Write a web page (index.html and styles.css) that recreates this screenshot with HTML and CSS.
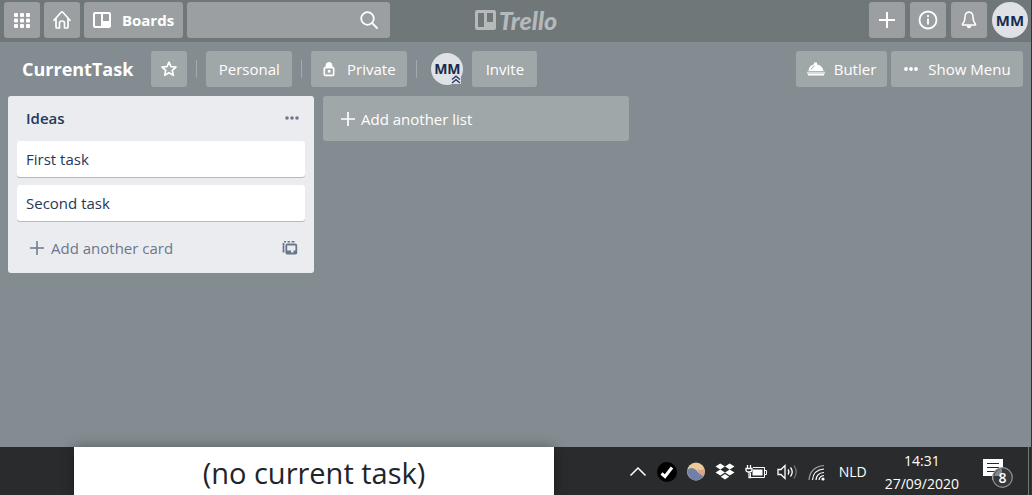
FILE: index.html
```html
<!DOCTYPE html>
<html lang="en">
<head>
<meta charset="utf-8">
<title>CurrentTask | Trello</title>
<link rel="stylesheet" href="styles.css">
</head>
<body>
<div class="screen">
  <header class="topbar">
    <div class="topbar-side">
      <button class="btn btn-top btn-square" aria-label="Apps">
        <svg width="16" height="16" viewBox="0 0 16 16" fill="currentColor"><rect x="0" y="1" width="4" height="4" rx="1"/><rect x="6" y="1" width="4" height="4" rx="1"/><rect x="12" y="1" width="4" height="4" rx="1"/><rect x="0" y="6.500" width="4" height="4" rx="1"/><rect x="6" y="6.500" width="4" height="4" rx="1"/><rect x="12" y="6.500" width="4" height="4" rx="1"/><rect x="0" y="12" width="4" height="4" rx="1"/><rect x="6" y="12" width="4" height="4" rx="1"/><rect x="12" y="12" width="4" height="4" rx="1"/></svg>
      </button>
      <button class="btn btn-top btn-square" aria-label="Home">
        <svg width="20" height="20" viewBox="0 0 20 20" fill="none" stroke="currentColor" stroke-width="1.700" stroke-linejoin="round" stroke-linecap="round"><path d="M2 10.300 9.200 2.300Q10 1.500 10.800 2.300L18 10.300M4 8.300V17.200Q4 18 4.800 18H7.500V13Q7.500 11 10 11Q12.500 11 12.500 13V18H15.200Q16 18 16 17.200V8.300"/></svg>
      </button>
      <button class="btn btn-top btn-boards">
        <svg width="18" height="18" viewBox="0 0 18 18"><path fill="currentColor" fill-rule="evenodd" d="M2 1H16Q18 1 18 3V15Q18 17 16 17H2Q0 17 0 15V3Q0 1 2 1ZM2 3V15H8V3ZM10 3V10H16V3Z"/></svg>
        <span>Boards</span>
      </button>
      <div class="search">
        <input class="search-input" type="text" aria-label="Search">
        <svg class="search-icon" width="18" height="18" viewBox="0 0 18 18" fill="none" stroke="currentColor" stroke-width="1.800" stroke-linecap="round"><circle cx="7.500" cy="7.500" r="6.300"/><path d="M12.200 12.200 17 17"/></svg>
      </div>
    </div>
    <a class="logo" href="#">
      <svg width="22" height="22" viewBox="0 0 22 22"><path fill="currentColor" fill-rule="evenodd" d="M2 1H19Q21 1 21 3V19Q21 21 19 21H2Q0 21 0 19V3Q0 1 2 1ZM3 4V18H9V4ZM12 4V13H18V4Z"/></svg>
      <span class="wordmark">Trello</span>
    </a>
    <div class="topbar-side topbar-end">
      <button class="btn btn-top btn-square" aria-label="Create">
        <svg width="18" height="18" viewBox="0 0 18 18" stroke="currentColor" stroke-width="2"><path d="M1 9H17M9 1V17"/></svg>
      </button>
      <button class="btn btn-top btn-square" aria-label="Information">
        <svg width="20" height="20" viewBox="0 0 20 20" fill="none" stroke="currentColor"><circle cx="10" cy="10" r="8.500" stroke-width="1.800"/><path d="M10 8.500V14.500M10 5V7" stroke-width="1.800"/></svg>
      </button>
      <button class="btn btn-top btn-square" aria-label="Notifications">
        <svg width="18" height="20" viewBox="0 0 18 20" fill="none" stroke="currentColor" stroke-width="1.500" stroke-linejoin="round"><path d="M9 2Q5 2.500 5 7Q5 11.500 2.500 14V15H15.500V14Q13 11.500 13 7Q13 2.500 9 2Z"/><path d="M7.500 15.500Q7.500 17.500 9 17.500Q10.500 17.500 10.500 15.500" fill="currentColor"/></svg>
      </button>
      <button class="avatar avatar-large" aria-label="Account MM">MM</button>
    </div>
  </header>

  <main class="board">
    <div class="boardbar">
      <h1 class="board-title">CurrentTask</h1>
      <button class="btn btn-board btn-square" aria-label="Star board">
        <svg width="16" height="16" viewBox="0 0 16 16" fill="none" stroke="currentColor" stroke-width="1.700" stroke-linejoin="round"><path d="M8 1.200 10 5.600 15 6 11.300 9.300 12.300 14.300 8 11.700 3.700 14.300 4.700 9.300 1 6 6 5.600Z"/></svg>
      </button>
      <span class="divider"></span>
      <button class="btn btn-board btn-text">Personal</button>
      <span class="divider"></span>
      <button class="btn btn-board btn-private">
        <svg width="12" height="16" viewBox="0 0 12 16" fill="none" stroke="currentColor"><path d="M3 6.500V4.500Q3 1.500 6 1.500Q9 1.500 9 4.500V6.500Z" fill="currentColor"/><rect x="1.300" y="6.700" width="9.400" height="7.600" rx="1" stroke-width="1.700"/><rect x="4.800" y="9" width="2.600" height="2.600" fill="currentColor" stroke="none"/></svg>
        <span>Private</span>
      </button>
      <span class="divider"></span>
      <span class="member">
        <button class="avatar avatar-small" aria-label="Member MM">MM</button>
        <svg class="member-badge" width="10" height="9" viewBox="0 0 10 9"><path d="M0 0H10V9H0Z" fill="#dfe1e6"/><path d="M1 4.500 5 1.200 9 4.500M1 8 5 4.700 9 8" fill="none" stroke="#2b3d68" stroke-width="1.400"/></svg>
      </span>
      <button class="btn btn-board btn-invite">Invite</button>
      <div class="boardbar-end">
        <button class="btn btn-board btn-butler">
          <svg width="18" height="16" viewBox="0 0 18 16" fill="currentColor"><path d="M1.500 10Q2 4.500 7 3.200V1.500H10V3.200Q15.500 4.500 16.500 10Z"/><path d="M0 10.700H18V13H0Z" opacity=".6"/><path d="M1 13H17V14.500H1Z"/><path d="M4 8.500Q5 6 7.500 5" stroke="#a0a7a9" fill="none"/></svg>
          <span>Butler</span>
        </button>
        <button class="btn btn-board btn-menu">
          <svg width="16" height="16" viewBox="0 0 16 16" fill="currentColor"><circle cx="3" cy="8" r="1.900"/><circle cx="8" cy="8" r="1.900"/><circle cx="13" cy="8" r="1.900"/></svg>
          <span>Show Menu</span>
        </button>
      </div>
    </div>

    <div class="lists">
      <section class="list">
        <div class="list-header">
          <h2 class="list-title">Ideas</h2>
          <button class="icon-btn" aria-label="List actions">
            <svg width="16" height="16" viewBox="0 0 16 16" fill="currentColor"><circle cx="3" cy="8" r="1.800"/><circle cx="8" cy="8" r="1.800"/><circle cx="13" cy="8" r="1.800"/></svg>
          </button>
        </div>
        <a class="card" href="#">First task</a>
        <a class="card" href="#">Second task</a>
        <div class="list-footer">
          <button class="add-card">
            <svg width="14" height="14" viewBox="0 0 14 14" stroke="currentColor" stroke-width="1.500"><path d="M0 7H14M7 0V14"/></svg>
            <span>Add another card</span>
          </button>
          <button class="icon-btn" aria-label="Create from template">
            <svg width="16" height="16" viewBox="0 0 16 16" fill="none" stroke="currentColor"><path d="M1.500 12V3.500M2 1.800H4M5.500 1.800H8M9.500 1.800H12.500" stroke-width="1.500"/><path d="M1.500 3V5M1.500 6.500V8.500M1.500 10V12.500" stroke-width="1.500"/><rect x="4.300" y="4.500" width="10" height="9" rx="1" stroke-width="1.800"/><path d="M4 10.500H9V14H4ZM11.500 10.500H15V14H11.500Z" fill="currentColor" stroke="none"/></svg>
          </button>
        </div>
      </section>
      <button class="add-list">
        <svg width="14" height="14" viewBox="0 0 14 14" stroke="currentColor" stroke-width="1.700"><path d="M0 7H14M7 0V14"/></svg>
        <span>Add another list</span>
      </button>
    </div>
  </main>

  <footer class="taskbar">
    <div class="current-task">(no current task)</div>
    <div class="tray">
      <svg width="18" height="20" viewBox="0 0 18 20" fill="none" stroke="#fff" stroke-width="1.500"><path d="M1.500 13.500 9 6 16.500 13.500"/></svg>
      <svg width="20" height="20" viewBox="0 0 20 20"><circle cx="10" cy="10" r="10" fill="#000"/><path d="M4.500 11.500 8 14.500 15 5.500" fill="none" stroke="#fff" stroke-width="3"/></svg>
      <svg width="18" height="20" viewBox="0 0 18 20"><circle cx="9" cy="9.500" r="9" fill="#edc998"/><path d="M10 7Q13 9 17.500 7Q18.500 13 14.500 16Z" fill="#d9a58c"/><path d="M0 8Q5 4 9 8Q12 12 16 14Q13 18.500 9 18.500Q1 18 0 8Z" fill="#7180aa"/></svg>
      <svg width="20" height="20" viewBox="0 0 20 20" fill="#fff"><path d="M5.300 1.500 10 4.500 5.300 7.500.5 4.500ZM14.700 1.500 19.500 4.500 14.700 7.500 10 4.500ZM5.300 7.500 10 10.500 5.300 13.500.5 10.500ZM14.700 7.500 19.500 10.500 14.700 13.500 10 10.500ZM10 12 14.200 14.700 10 17.500 5.800 14.700Z"/></svg>
      <svg width="22" height="20" viewBox="0 0 22 20"><path d="M8 5.500H19.500V15.500H5.500V11" fill="none" stroke="#fff"/><path d="M8 7.500H17.500V13.500H7.500V10Z" fill="#fff"/><path d="M20 8.500H21.500V12.500H20" fill="none" stroke="#fff"/><path d="M2.500 3V6M5.500 3V6M1 6.500H7V8Q7 10 4 10Q1 10 1 8ZM4 10V15.500H6" fill="none" stroke="#fff" stroke-width="1.300"/></svg>
      <svg width="21" height="20" viewBox="0 0 21 20" fill="none" stroke="#fff" stroke-width="1.300"><path d="M1 7.500H4L8 3.500V16.500L4 12.500H1Z"/><path d="M11 7.500Q12.800 10 11 12.500M13.500 5.500Q17 10 13.500 14.500"/><path d="M17 3.500Q21.500 10 17 16.500" stroke="#75757f"/></svg>
      <svg width="18" height="20" viewBox="0 0 18 20" fill="none" stroke="#fff" stroke-width="1.200"><path d="M1 18Q2 5 16 3.500" stroke="#a1a1a5"/><path d="M4.500 18Q5 8 16 7M8 18Q8.500 11 16 10.500M11 18Q11.500 14 16 13.500"/><circle cx="15" cy="17" r="1.600" fill="#fff" stroke="none"/></svg>
      <span class="language">NLD</span>
      <div class="clock"><time>14:31</time><time>27/09/2020</time></div>
      <svg class="action-center" width="32" height="32" viewBox="0 0 32 32"><path d="M1 3H21V20H14L10 24V20H1Z" fill="#fff"/><path d="M5 7.500H17M5 11.500H17M5 15.500H13" stroke="#26282a" stroke-width="1.200"/><circle cx="20.500" cy="21.500" r="9.800" fill="#36393b" stroke="#929595" stroke-width="1.200"/><path d="M12 20Q13.500 14 20 12.500V20Z" fill="#858889"/><text class="badge-count" x="20.500" y="26.500" text-anchor="middle">8</text></svg>
    </div>
    <span class="show-desktop"></span>
  </footer>
</div>
</body>
</html>
```
FILE: styles.css
```css
* { box-sizing: border-box; }

body {
  margin: 0;
  font-family: "Open Sans", "Noto Sans", sans-serif;
  font-size: 15px;
  line-height: 20px;
  color: #253858;
}

button, input { font: inherit; color: inherit; margin: 0; border: 0; padding: 0; }
button { display: flex; align-items: center; justify-content: center; white-space: nowrap; cursor: pointer; }
a { color: inherit; text-decoration: none; }
h1, h2 { margin: 0; }
svg { display: block; flex: none; }

.screen {
  display: flex;
  flex-direction: column;
  min-height: 100vh;
  background: #838c91;
  border-right: 1px solid #303436;
}

.topbar {
  display: grid;
  grid-template-columns: 1fr auto 1fr;
  align-items: start;
  height: 42px;
  padding: 2px 3px 4px 4px;
  background: #6f7779;
  color: #fff;
}
.topbar-side { display: flex; gap: 4px; }
.topbar-end { gap: 5px; justify-content: flex-end; }

.btn { height: 36px; border-radius: 3px; color: #fff; }
.btn-top { background: #9b9fa1; }
.btn-board { background: #a0a7a9; }
.btn-square { width: 36px; }
.btn-boards { width: 99px; gap: 11px; font-weight: 700; }

.search {
  display: flex;
  align-items: center;
  width: 203px;
  height: 36px;
  padding-right: 12px;
  border-radius: 3px;
  background: #9b9fa1;
}
.search-input { flex: 1; min-width: 0; height: 36px; padding-left: 10px; background: transparent; outline: 0; }

.logo { display: flex; align-items: center; gap: 2px; height: 36px; color: #b5b9ba; }
.wordmark { font-family: Lato, sans-serif; font-size: 25px; font-weight: 900; font-style: italic; line-height: 32px; }

.avatar { border-radius: 50%; background: #dfe1e6; color: #172b4d; font-weight: 700; }
.avatar-large { width: 36px; height: 36px; font-size: 15px; }
.avatar-small { width: 32px; height: 32px; font-size: 14px; }
.member { position: relative; margin-right: 9px; margin-left: 5px; }
.member-badge { position: absolute; right: 2px; bottom: 1px; }

.board { display: flex; flex: 1; flex-direction: column; }
.boardbar { display: flex; align-items: center; padding: 9px 8px 9px 22px; }
.board-title { margin-right: 18px; font-size: 18px; line-height: 28px; font-weight: 700; color: #fff; }
.divider { width: 1px; height: 18px; margin: 0 9px; background: #a3aaac; }
.btn-text { width: 86px; }
.btn-private { width: 96px; gap: 12px; }
.btn-invite { width: 65px; }
.boardbar-end { display: flex; gap: 4px; margin-left: auto; }
.btn-butler { width: 91px; gap: 9px; }
.btn-menu { width: 132px; gap: 9px; }

.lists { display: flex; align-items: flex-start; gap: 9px; padding: 0 8px; }
.list { width: 306px; padding: 0 9px 7px; border-radius: 3px; background: #ebecf0; }
.list-header { display: flex; align-items: center; justify-content: space-between; height: 45px; padding: 0 5px 2px 9px; }
.list-title { font-size: 15px; line-height: 20px; font-weight: 600; }
.icon-btn { width: 17px; height: 24px; background: transparent; color: #6b778c; }
.card {
  display: block;
  margin-bottom: 8px;
  padding: 8px 9px;
  border-radius: 3px;
  background: #fff;
  box-shadow: 0 1px 0 #b3b9c5;
}
.list-footer { display: flex; align-items: center; justify-content: space-between; height: 37px; padding: 0 7px 0 13px; }
.add-card { gap: 7px; background: transparent; color: #6b778c; }
.add-list { justify-content: flex-start; gap: 6px; width: 306px; height: 45px; padding: 0 18px; border-radius: 3px; background: #a0a7a9; color: #fff; }

.taskbar { display: flex; height: 48px; background: #292b2c; color: #fff; }
.current-task {
  flex: 0 0 480px;
  margin-left: 74px;
  padding-top: 6px;
  background: #fff;
  box-shadow: 0 0 12px rgba(0, 0, 0, .35);
  color: #212529;
  font-size: 29px;
  line-height: 40px;
  text-align: center;
}
.tray { display: flex; align-items: center; gap: 10px; margin-left: auto; padding: 1px 14px 0 0; font-size: 14px; }
.language { margin-left: 3px; }
.clock { display: flex; flex-direction: column; align-items: center; margin-left: 8px; line-height: 23px; }
.action-center { margin-left: 13px; }
.badge-count { fill: #fff; font-size: 14px; font-weight: 600; }
.show-desktop { width: 3px; border-left: 1px solid #777; }
```
